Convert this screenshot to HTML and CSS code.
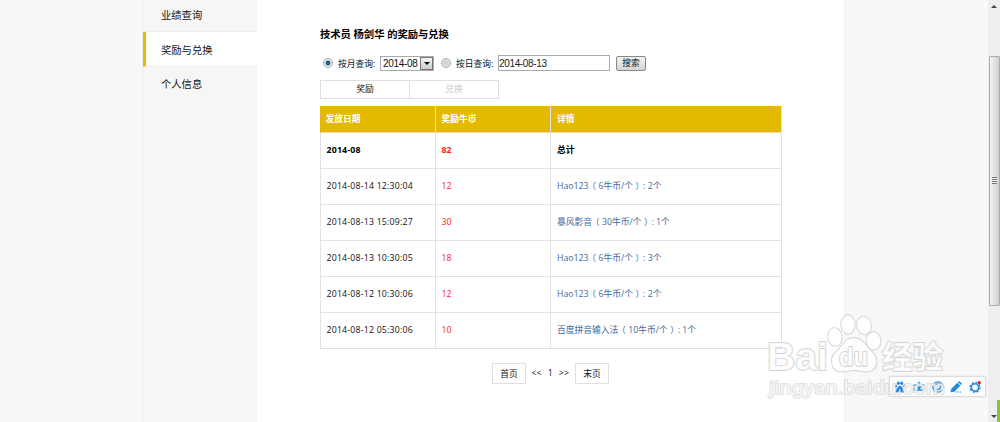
FILE: index.html
```
<!DOCTYPE html>
<html lang="zh-CN">

<head>
  <meta charset="utf-8" />
  <title>奖励与兑换</title>
  <link rel="stylesheet" href="styles.css">
</head>

<body>
  <div class="page">
    <nav class="sidebar">
      <a class="item first">业绩查询</a>
      <a class="item active">奖励与兑换</a>
      <a class="item">个人信息</a>
    </nav>

    <main class="content">
      <h1>技术员 杨剑华 的奖励与兑换</h1>

      <form class="search">
        <span class="radio checked"></span>
        <label class="month-label">按月查询:</label>
        <span class="select"><span>2014-08</span><i class="arrow"></i></span>
        <span class="radio"></span>
        <label class="day-label">按日查询:</label>
        <input type="text" value="2014-08-13">
        <button type="button">搜索</button>
      </form>

      <div class="tabs">
        <a class="tab">奖励</a>
        <a class="tab disabled">兑换</a>
      </div>

      <table>
        <thead>
          <tr><th>发放日期</th><th>奖励牛币</th><th>详情</th></tr>
        </thead>
        <tbody>
          <tr class="total"><td>2014-08</td><td>82</td><td>总计</td></tr>
          <tr><td>2014-08-14 12:30:04</td><td>12</td><td>Hao123<b class="open">（</b>6牛币/个<b class="close">）</b>: 2个</td></tr>
          <tr><td>2014-08-13 15:09:27</td><td>30</td><td>暴风影音<b class="open">（</b>30牛币/个<b class="close">）</b>: 1个</td></tr>
          <tr><td>2014-08-13 10:30:05</td><td>18</td><td>Hao123<b class="open">（</b>6牛币/个<b class="close">）</b>: 3个</td></tr>
          <tr><td>2014-08-12 10:30:06</td><td>12</td><td>Hao123<b class="open">（</b>6牛币/个<b class="close">）</b>: 2个</td></tr>
          <tr><td>2014-08-12 05:30:06</td><td>10</td><td>百度拼音输入法<b class="open">（</b>10牛币/个<b class="close">）</b>: 1个</td></tr>
        </tbody>
      </table>

      <div class="pager">
        <a>首页</a>
        <span>&lt;&lt;&nbsp; 1 &nbsp;&gt;&gt;</span>
        <a>末页</a>
      </div>
    </main>

    <div class="gutter"></div>

    <div class="scrollbar">
      <i class="up"></i>
      <div class="thumb"><i class="grip"></i></div>
      <i class="down"></i>
    </div>
  </div>

  <!-- Floating toolbar -->
  <div class="toolbar">
    <svg viewBox="0 0 14 14" fill="#2489e5">
      <ellipse cx="2" cy="6" rx="1.7" ry="2" /><ellipse cx="5" cy="2.6" rx="1.7" ry="2.1" />
      <ellipse cx="9" cy="2.6" rx="1.7" ry="2.1" /><ellipse cx="12" cy="6" rx="1.7" ry="2" />
      <path d="M7 5.500C5 5.500 4.600 8 3 9.200 1 10.800 1.500 13.500 3.800 13.500H6V9.500H7.300V13.500H10.500C12.800 13.500 13 10.500 11 9.200 9.400 8 9 5.500 7 5.500Z" />
    </svg>
    <svg viewBox="0 0 14 14" fill="none" stroke="#2489e5" stroke-width="1.7">
      <path d="M7 1V9M.5 5H5M9 5H13.500M1.500 7V10.500H12.500V7M4.500 6.500 7 9 9.500 6.500" />
    </svg>
    <svg viewBox="0 0 14 14" fill="none" stroke="#2489e5" stroke-width="1.6">
      <circle cx="7" cy="7" r="6" /><path d="M3.500 7A3.500 3.500 0 0 1 10.500 7M4 8.200Q7 12 10 8.200M4.500 6V9M9.500 6V9" />
    </svg>
    <svg viewBox="0 0 14 14" fill="#2489e5">
      <path d="M.5 13 1.500 9 8.500 2 12 5.500 5 12.500ZM9.300 1.400 10.700 0 14 3.300 12.600 4.700ZM6.500 12.200H8V13.400H6.500ZM9 12.200H10.400V13.400H9ZM11.400 12.200H12.800V13.400H11.400Z" />
    </svg>
    <svg viewBox="0 0 14 14" fill="none" stroke="#2489e5">
      <circle cx="7" cy="7.500" r="4.300" stroke-width="2" /><circle cx="7" cy="7.500" r="5.700" stroke-width="1.8" stroke-dasharray="2.240 2.240" />
      <circle cx="12" cy="1.900" r="1.800" fill="#f0141e" stroke="none" />
    </svg>
  </div>

  <!-- Watermark -->
  <svg class="watermark" viewBox="0 0 190 95">
    <g class="mark">
      <ellipse cx="75" cy="27" rx="7" ry="9" transform="rotate(-8 75 27)" />
      <ellipse cx="88" cy="14.500" rx="6.800" ry="9.300" />
      <ellipse cx="104" cy="15.500" rx="7" ry="9" transform="rotate(-10 104 15.500)" />
      <ellipse cx="113.500" cy="31" rx="7" ry="9" />
      <path d="M94 28C85 28 82 37 76 42 69 48 71 61 81 61.500 87 62 90 60 94 60 99 60 103 62 108 61.500 118 60 119 48 112 42 106 37 103 28 94 28Z" />
      <text class="latin" x="7" y="60" textLength="61" lengthAdjust="spacingAndGlyphs">Bai</text>
      <text class="du" x="79" y="56" textLength="29" lengthAdjust="spacingAndGlyphs">du</text>
      <text class="cjk" x="122" y="58" textLength="61" lengthAdjust="spacingAndGlyphs">经验</text>
      <text class="url" x="9" y="84" textLength="176" lengthAdjust="spacingAndGlyphs">jingyan.baidu.com</text>
    </g>
  </svg>
  <div class="corner"></div>
</body>

</html>
```
FILE: styles.css
```
* {
  margin: 0;
  padding: 0;
  box-sizing: border-box;
}

body {
  height: 422px;
  overflow: hidden;
  position: relative;
  background: #f8f8f8;
  color: #111;
  font-family: "Open Sans", "Noto Sans CJK SC", sans-serif;
  font-size: 8.75px;
}

.page {
  display: flex;
  height: 422px;
  padding-left: 142px;
}

/* Sidebar */
.sidebar {
  width: 115px;
  background: #f6f6f6;
  border-left: 1px solid #eee;
  font-size: 10.3px;
}

.item {
  display: block;
  height: 34px;
  line-height: 35px;
  padding-left: 18px;
}

.item.first {
  height: 32px;
  line-height: 31px;
  border-bottom: 1px solid #eee;
}

.item.active {
  height: 35px;
  line-height: 36px;
  padding-left: 15px;
  background: #fff;
  border-left: 3px solid #e4ba00;
  border-bottom: 1px solid #eee;
}

/* Content */
.content {
  width: 588px;
  padding: 27px 0 0 63px;
  background: #fff;
  border-right: 1px solid #efefef;
}

h1 {
  height: 15px;
  line-height: 15px;
  font-size: 10.3px;
  font-weight: bold;
  color: #000;
  white-space: nowrap;
}

.search {
  display: flex;
  align-items: center;
  height: 16px;
  margin-top: 13px;
  padding-left: 3px;
}

.search label {
  white-space: nowrap;
}

.radio {
  width: 10px;
  height: 10px;
  border: 1px solid #aaa;
  border-radius: 50%;
  background: radial-gradient(#ccc, #eee);
}

.radio.checked {
  background: radial-gradient(#2f8fb8 0, #174a6b 35%, #e4eaee 50%);
}

.month-label {
  width: 42px;
  margin-left: 5px;
}

.select {
  display: flex;
  justify-content: space-between;
  width: 54px;
  height: 15px;
  margin-right: 7px;
  padding-left: 2px;
  border: 1px solid #aaa;
  font: 10px/14px "Liberation Sans", sans-serif;
  letter-spacing: -.3px;
  white-space: nowrap;
}

.arrow {
  flex: none;
  width: 13px;
  border: 1px solid #777;
  background: linear-gradient(#f4f4f4, #ccc);
}

.arrow::before {
  content: "";
  display: block;
  margin: 4px auto 0;
  width: 0;
  border: 3px solid transparent;
  border-top-color: #000;
  border-bottom: 0;
}

.day-label {
  width: 42px;
  margin-left: 5px;
}

.search input {
  width: 112px;
  height: 16px;
  border: 1px solid #aaa;
  color: #222;
  font: 10px "Liberation Sans", sans-serif;
  letter-spacing: -.35px;
}

.search button {
  width: 30px;
  height: 15px;
  margin-left: 6px;
  border: 1px solid #888;
  border-radius: 2px;
  background: linear-gradient(#f4f4f4, #d4d4d4);
  color: #111;
  font: 8.75px/12px "Noto Sans CJK SC", sans-serif;
}

.tabs {
  display: flex;
  width: 179px;
  height: 19px;
  margin: 9px 0 7px;
  border: 1px solid #e0e0e0;
  text-align: center;
  line-height: 17px;
}

.tab {
  flex: 1;
}

.disabled {
  border-left: 1px solid #e0e0e0;
  color: #ccc;
}

/* Table */
table {
  width: 462px;
  table-layout: fixed;
  border-collapse: separate;
  border-spacing: 0;
  border-right: 1px solid #e2e2e2;
}

th,
td {
  height: 36px;
  padding: 0 0 1px 6px;
  border-left: 1px solid #e2e2e2;
  border-bottom: 1px solid #e2e2e2;
  text-align: left;
  vertical-align: middle;
  line-height: 12px;
  white-space: nowrap;
}

th:nth-child(-n+2) {
  width: 115px;
}

th {
  height: 27px;
  padding-bottom: 0;
  background: #e4ba00;
  color: #fff;
  border-bottom-color: #eadb9a;
}

tr > :nth-child(-n+2) {
  padding-left: 5.5px;
}

tr > th:first-child {
  padding-left: 4.5px;
  border-left-color: #e4ba00;
}

td:first-child {
  letter-spacing: .2px;
}

td:nth-child(2) {
  color: #f22;
}

td:nth-child(3) {
  color: #436a9e;
}

td b {
  font-family: "Noto Sans CJK SC", sans-serif;
  font-weight: normal;
}

.open {
  margin: 0 2.5px 0 -1.3px;
}

.close {
  margin: 0 -1.2px 0 2.5px;
}

.total td {
  font-weight: bold;
}

.total td:not(:nth-child(2)) {
  color: #000;
}

/* Pager */
.pager {
  display: flex;
  width: 117px;
  height: 21px;
  margin: 14px 0 0 172px;
  justify-content: space-between;
  line-height: 20px;
}

.pager a {
  width: 34px;
  border: 1px solid #e0e0e0;
  text-align: center;
}

.pager span {
  letter-spacing: .45px;
}

/* Scrollbar */
.gutter {
  flex: 1;
}

.scrollbar {
  display: flex;
  flex-direction: column;
  justify-content: space-between;
  align-items: center;
  width: 12px;
  padding: 4px 0;
  background: #eee;
}

.up,
.down {
  border: 3px solid transparent;
}

.up {
  margin-top: -2px;
  border-bottom-color: #444;
}

.down {
  margin-bottom: -3px;
  border-top-color: #444;
}

.thumb {
  display: flex;
  align-items: center;
  justify-content: center;
  width: 11px;
  height: 250px;
  margin-bottom: 62px;
  border: 1px solid #aaa;
  border-radius: 1px;
  background: linear-gradient(90deg, #f4f4f4, #cfcfcf);
}

.grip {
  width: 5px;
  height: 7px;
  background: repeating-linear-gradient(#777 0 1px, #eee 1px 2px);
}

.corner {
  position: absolute;
  right: 0;
  bottom: 0;
  width: 3px;
  height: 22px;
  background: #8fc31f;
}

/* Overlays */
.toolbar {
  position: absolute;
  left: 889px;
  top: 376px;
  display: flex;
  align-items: center;
  justify-content: space-between;
  width: 97px;
  height: 21px;
  padding: 0 4px;
  background: #fcfcfc;
  border: 1px solid #ddd;
  box-shadow: 0 0 2px #ddd;
}

.toolbar svg {
  width: 12px;
  height: 12px;
  overflow: visible;
}

.watermark {
  position: absolute;
  left: 760px;
  top: 310px;
  width: 190px;
  height: 95px;
}

.mark {
  fill: rgba(255, 255, 255, .85);
  stroke: #d4d4d4;
  stroke-width: 1.8px;
  paint-order: stroke;
  stroke-linejoin: round;
  font-family: "Liberation Sans", "Noto Sans CJK SC", sans-serif;
}

.latin {
  font-size: 39px;
  font-weight: bold;
}

.du {
  font-size: 25px;
  font-weight: bold;
}

.cjk {
  font-size: 31px;
  font-weight: bold;
}

.url {
  font-family: Roboto, sans-serif;
  font-size: 19px;
  fill: rgba(255, 255, 255, .7);
  stroke: rgba(205, 205, 205, .6);
}
```
